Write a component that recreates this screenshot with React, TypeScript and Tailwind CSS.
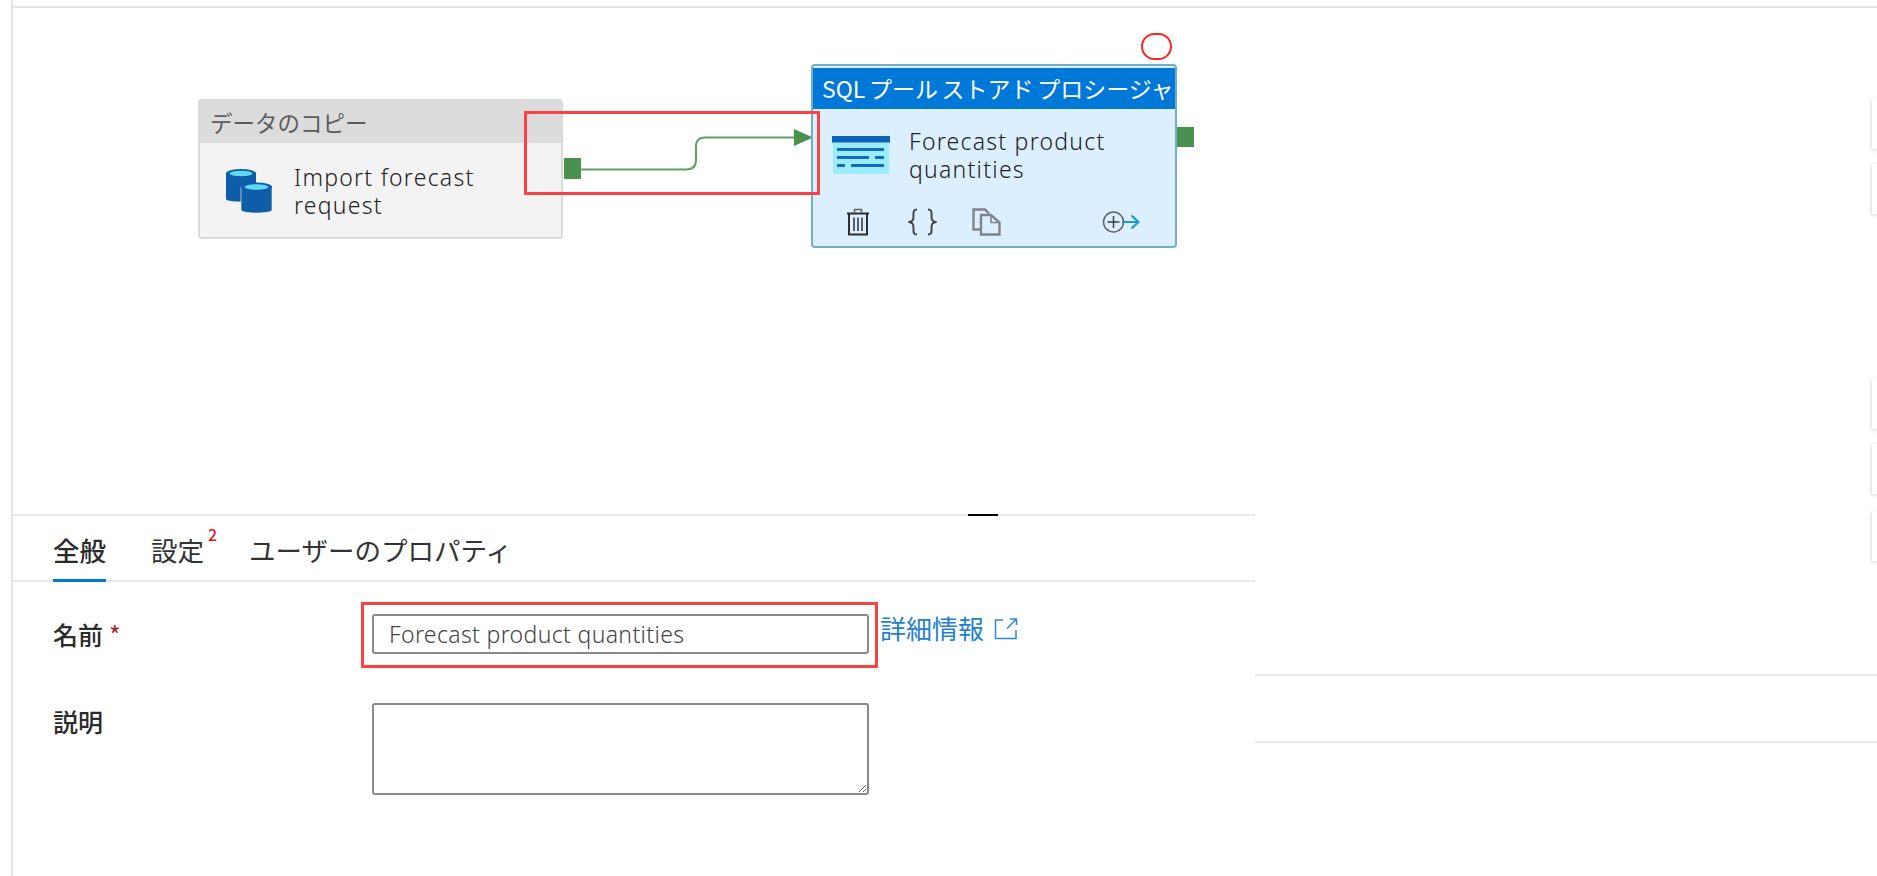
import React from "react";

const jp = "font-['Noto_Sans_CJK_JP','Noto_Sans',sans-serif]";
const latin = "font-['Noto_Sans','Noto_Sans_CJK_JP',sans-serif]";

const DatabaseIcon = () => (
  <svg width="46" height="46" viewBox="0 0 46 46" className="shrink-0">
    <path d="M0 5.5C0 2 30 2 30 5.5V31C30 34.5 0 34.5 0 31Z" fill="#0F5CA8" />
    <ellipse cx="15" cy="5.5" rx="15" ry="4.5" fill="#0F5CA8" />
    <ellipse cx="15" cy="5.5" rx="11.5" ry="2.8" fill="#5FD9F2" />
    <path d="M15 19C15 15.5 46 15.5 46 19V42C46 46 15 46 15 42Z" fill="#0F5CA8" stroke="#fff" strokeWidth="0.6" />
    <ellipse cx="30.5" cy="19" rx="15.5" ry="4.5" fill="#0F5CA8" />
    <ellipse cx="30.5" cy="19" rx="12" ry="2.8" fill="#5FD9F2" />
  </svg>
);

const ProcedureIcon = () => (
  <svg width="58" height="39" viewBox="0 0 58 39" className="shrink-0">
    <rect x="1" y="0" width="56" height="38" fill="#9CEBFF" />
    <rect x="0" y="0" width="58" height="6.5" fill="#0A63B8" />
    <g fill="#0F6CC4">
      <rect x="5" y="12" width="47" height="3" />
      <rect x="5" y="20" width="32" height="3" />
      <rect x="43" y="20" width="9" height="3" />
      <rect x="5" y="28" width="8" height="3" />
      <rect x="19" y="28" width="33" height="3" />
    </g>
  </svg>
);

const TrashIcon = () => (
  <svg width="24" height="28" viewBox="0 0 24 28" fill="none" stroke="#2f2f2f">
    <path d="M1 5.5H23" strokeWidth="2" />
    <path d="M8.5 4.5V1.5H15.5V4.5" strokeWidth="1.6" stroke="#666" />
    <path d="M3 6V26.5H21V6" strokeWidth="2" />
    <path d="M8 9.5V23M12 9.5V23M16 9.5V23" strokeWidth="1.5" />
  </svg>
);

const BracesIcon = () => (
  <svg width="29" height="28" viewBox="0 0 29 28" fill="none" stroke="#444" strokeWidth="2">
    <path d="M9 1.5C5 1.5 5.5 4 5.5 8C5.5 11.5 5 13 1.5 14C5 15 5.5 16.500 5.5 20C5.5 24 5 26.500 9 26.500" />
    <path d="M20 1.5C24 1.5 23.500 4 23.500 8C23.500 11.500 24 13 27.500 14C24 15 23.500 16.500 23.500 20C23.500 24 24 26.500 20 26.500" />
  </svg>
);

const CopyIcon = () => (
  <svg width="29" height="28" viewBox="0 0 29 28" fill="none" stroke="#808488" strokeWidth="2.4">
    <path d="M8 21.500H1.500V1.500H13L17 5.500" />
    <path d="M9 7H19L27.500 14.500V26.500H9Z" fill="#DCEFFF" />
    <path d="M19 7V14.500H27.500" strokeWidth="1.6" />
  </svg>
);

const AddArrowIcon = () => (
  <svg width="38" height="22" viewBox="0 0 38 22" fill="none">
    <circle cx="11.500" cy="11" r="10" stroke="#5f6368" strokeWidth="1.500" />
    <path d="M5.500 11H17.500M11.500 5V17" stroke="#3c4043" strokeWidth="1.500" />
    <path d="M20 11H36M29.500 4.500L36.500 11L29.500 17.500" stroke="#1A9BCB" strokeWidth="2.200" />
  </svg>
);

const ExternalIcon = () => (
  <svg width="24" height="22" viewBox="0 0 24 22" fill="none" stroke="#2B88D8" strokeWidth="1.500">
    <path d="M9 2H1.500V20.500H22V12" />
    <path d="M13 10.500L22.500 1M16 1H22.500V7" />
  </svg>
);

const Port = ({ className }: { className: string }) => (
  <div className={`absolute bg-[#4A9150] ${className}`} />
);

const Canvas = () => (
  <div className="relative h-[506px] shrink-0">
    {/* copy activity */}
    <div className="absolute left-[185px] top-[91px] w-[365px] h-[140px] rounded-[4px] border-2 border-[#DADADA] bg-[#F3F3F3] overflow-hidden">
      <div className={`h-[42px] bg-[#DCDCDC] pl-[10px] text-[22.500px] leading-[42px] text-[#5c5c5c] ${jp}`}>
        データのコピー
      </div>
      <div className="flex items-center gap-[22px] pl-[26px] pt-[20px]">
        <DatabaseIcon />
        <div className={`text-[23px] leading-[28px] font-light tracking-[1.25px] text-[#222] ${latin}`}>
          Import forecast
          <br />
          request
        </div>
      </div>
    </div>
    <Port className="left-[551px] top-[150px] w-[17px] h-[21px]" />

    <svg width="270" height="50" viewBox="0 0 270 50" fill="none" className="absolute left-[567px] top-[120px]">
      <path
        d="M0 41.500H106C113 41.500 116 38 116 32V18C116 12.500 119 9.500 125 9.500H216"
        stroke="#5FA066"
        strokeWidth="2"
      />
      <path d="M214 1L233 9.500L214 18Z" fill="#4A9150" />
    </svg>

    {/* stored procedure activity */}
    <div className="absolute left-[798px] top-[56px] w-[366px] h-[184px] rounded-[4px] border-2 border-[#6FAFC9] bg-[#DCEFFF] overflow-hidden flex flex-col">
      <div className={`mt-[2px] h-[41px] shrink-0 bg-[#0078D7] pl-[9px] whitespace-nowrap overflow-hidden text-[23px] leading-[40px] [word-spacing:-1.5px] text-white ${jp}`}>
        SQL プール ストアド プロシージャ
      </div>
      <div className="flex items-center gap-[19px] pl-[19px] pt-[18px]">
        <ProcedureIcon />
        <div className={`text-[23px] leading-[28px] font-light tracking-[1.25px] text-[#222] ${latin}`}>
          Forecast product
          <br />
          quantities
        </div>
      </div>
      <div className="flex items-center pl-[33px] pt-[25px]">
        <TrashIcon />
        <div className="ml-[38px]"><BracesIcon /></div>
        <div className="ml-[35px]"><CopyIcon /></div>
        <div className="ml-[101px]"><AddArrowIcon /></div>
      </div>
    </div>
    <Port className="left-[1164px] top-[119px] w-[17px] h-[20px]" />

    {/* review markers */}
    <div className="absolute left-[511px] top-[103px] w-[296px] h-[84px] border-[3px] border-[#FA4245]" />
    <div className="absolute left-[1128px] top-[25px] w-[31px] h-[27px] rounded-full border-2 border-[#F22]" />

    {/* side tool stubs */}
    {[91, 156, 371, 436, 503].map((top) => (
      <div
        key={top}
        className="absolute right-0 w-[5px] h-[50px] bg-white shadow-[0_1px_4px_rgba(0,0,0,0.22)]"
        style={{ top }}
      />
    ))}
  </div>
);

const Tabs = () => (
  <div className={`relative flex h-[66px] items-start gap-[45px] border-b-2 border-[#E8E8E8] pl-[40px] pt-[14px] text-[26.500px] leading-[40px] text-[#2b2b2b] ${jp}`}>
    <div className="relative h-[52px] font-medium border-b-[3px] border-[#0078D4]">全般</div>
    <div className="relative text-[#333]">
      設定
      <span className="absolute -right-[13px] -top-[6px] text-[16px] leading-[20px] font-medium text-[#E81123]">2</span>
    </div>
    <div className="text-[#333]">ユーザーのプロパティ</div>
  </div>
);

const Form = () => (
  <div className={`relative grid grid-cols-[319px_497px_1fr] pl-[40px] pt-[32px] ${jp}`}>
    <div className="flex gap-[6px] text-[25px] leading-[40px] font-medium text-[#2b2b2b]">
      名前 <span className="font-normal text-[#A4262C]">*</span>
    </div>
    <input
      defaultValue="Forecast product quantities"
      className={`h-[40px] w-[497px] rounded-[3px] border-2 border-[#8A8A8A] bg-white pl-[15px] text-[23px] font-light tracking-[0.35px] text-[#444] outline-none ${latin}`}
    />
    <div className="-mt-[2px] flex items-start gap-[10px] pl-[11px] text-[26px] leading-[32px] text-[#1F7FD1]">
      詳細情報
      <span className="pt-[6px]"><ExternalIcon /></span>
    </div>

    <div className="pt-[47px] text-[25px] leading-[40px] font-medium text-[#2b2b2b]">説明</div>
    <textarea className="mt-[49px] h-[92px] w-[497px] rounded-[3px] border-2 border-[#8A8A8A] bg-white outline-none" />
    <div />

    <div className="absolute left-[348px] top-[20px] w-[517px] h-[66px] border-[3px] border-[#FA4245]" />
  </div>
);

export default function App() {
  return (
    <div className="h-[876px] w-full overflow-hidden bg-white">
      <div className="flex h-full flex-col border-l-2 border-[#E6E6E6] ml-[11px]">
        <div className="h-[8px] shrink-0 border-b-2 border-[#E6E6E6]" />
        <div className="relative flex-1">
          <Canvas />
          <div className="flex">
            <div className="relative w-[1242px] shrink-0 border-t-2 border-[#E8E8E8]">
              <div className="absolute left-[955px] -top-[2px] h-[2px] w-[30px] bg-black" />
              <Tabs />
              <Form />
            </div>
            <div className="flex-1 pt-[160px]">
              <div className="h-[2px] bg-[#E8E8E8]" />
              <div className="mt-[65px] h-[2px] bg-[#E8E8E8]" />
            </div>
          </div>
        </div>
      </div>
    </div>
  );
}
